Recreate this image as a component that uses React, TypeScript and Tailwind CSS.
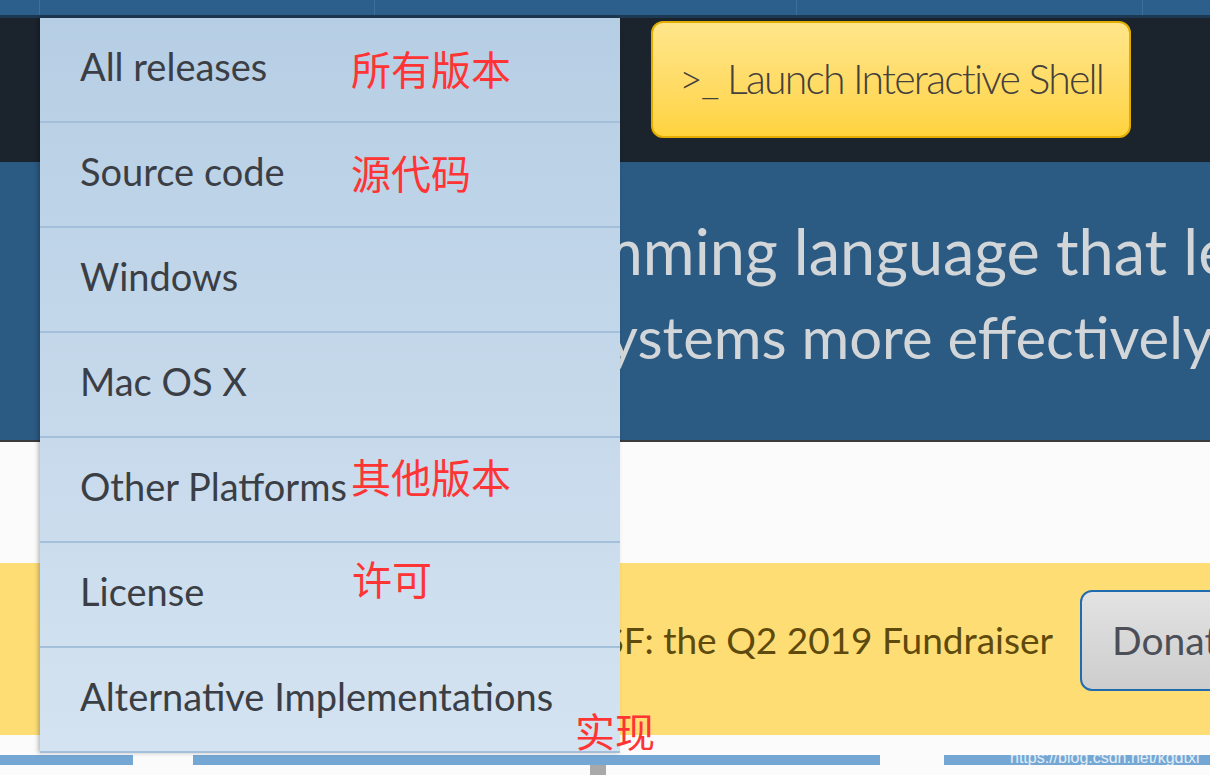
const menuItems = [
  "All releases",
  "Source code",
  "Windows",
  "Mac OS X",
  "Other Platforms",
  "License",
  "Alternative Implementations",
];

const notes = [
  { text: "所有版本", cls: "left-[351px] top-[46px]" },
  { text: "源代码", cls: "left-[351px] top-[150px]" },
  { text: "其他版本", cls: "left-[351px] top-[454px]" },
  { text: "许可", cls: "left-[352px] top-[556px]" },
  { text: "实现", cls: "left-[575px] top-[708px]" },
];

export default function App() {
  return (
    <div className="relative w-[1210px] h-[775px] overflow-hidden bg-[#fbfbfb] font-['Lato','Noto_Sans',sans-serif]">

      {/* TOP NAV STRIP */}

      <div className="flex h-[15px] bg-[#2c5f8b]">
        <div className="w-[40px] border-r border-[#3d6f9b]" />
        <div className="w-[335px] border-r border-[#3d6f9b]" />
        <div className="w-[422px] border-r border-[#3d6f9b]" />
        <div className="w-[346px] border-r border-[#3d6f9b]" />
        <div className="flex-1" />
      </div>
      <div className="h-[3px] bg-[#1d3852]" />

      {/* DARK HEADER */}

      <div className="flex h-[144px] bg-[#1b232d] pl-[651px] pt-[3px]">
        <button className="flex h-[117px] w-[480px] items-center justify-center whitespace-nowrap rounded-[12px] border-2 border-[#e2ad00] bg-gradient-to-b from-[#ffe68a] to-[#ffd33d] pb-[2px] text-[41px] font-light tracking-[-1.8px] text-[#45403c]">
          &gt;_ Launch Interactive Shell
        </button>
      </div>

      {/* HERO */}

      <div className="h-[280px] overflow-hidden border-b-2 border-[#3b3b3b] bg-[#2b5a83] pt-[47px] text-[#d3d6d9] whitespace-nowrap">
        <div className="flex text-[63px] leading-[84px]">
          <span className="w-[591px] shrink-0 text-right">
            Python is a progra
          </span>
          <span>mming language that lets you work quickly</span>
        </div>
        <div className="flex text-[58px] leading-[88px]">
          <span className="w-[608px] shrink-0 text-right">
            and integrate s
          </span>
          <span>ystems more effectively.</span>
        </div>
      </div>

      {/* WHITE GAP */}

      <div className="h-[121px] bg-[#fbfbfb]" />

      {/* FUNDRAISER BAND */}

      <div className="flex h-[172px] items-center justify-end gap-[27px] overflow-hidden bg-[#ffdd75] pb-[18px]">
        <span className="whitespace-nowrap text-[37px] text-[#5d4a0c]">
          Support the PSF: the Q2 2019 Fundraiser
        </span>
        <button className="mr-[-80px] flex h-[101px] w-[210px] shrink-0 items-center rounded-[12px] border-2 border-[#1f6db0] bg-gradient-to-b from-[#e3e3e3] to-[#cdcdcd] pl-[30px] text-[39px] text-[#4c4f58]">
          Donate
        </button>
      </div>

      {/* FOOTER STRIP */}

      <div className="relative h-[40px] bg-[#fbfbfb] pt-[20px]">
        <div className="flex h-[10px]">
          <div className="w-[133px] bg-[#74a7d3]" />
          <div className="w-[60px]" />
          <div className="w-[687px] bg-[#74a7d3]" />
          <div className="w-[64px]" />
          <div className="flex-1 bg-[#74a7d3]" />
        </div>
        <div className="ml-[590px] h-[10px] w-[16px] bg-[#a9a9a9]" />
        <span className="absolute left-[1010px] top-[11px] text-[16px] text-white/80 font-['Liberation_Sans',sans-serif]">
          https://blog.csdn.net/kgdtxl
        </span>
      </div>

      {/* DROPDOWN MENU */}

      <ul className="absolute left-[40px] top-[18px] w-[580px] bg-gradient-to-b from-[#b6cee4] to-[#d4e3f1] shadow-[-2px_0_4px_rgba(0,0,0,0.25)]">
        {menuItems.map((item) => (
          <li
            key={item}
            className="flex h-[105px] items-center border-b-2 border-[#a3bfda] pb-[6px] pl-[40px] text-[38px] text-[#3b3f45]"
          >
            {item}
          </li>
        ))}
      </ul>

      {/* RED NOTES */}

      {notes.map((note) => (
        <span
          key={note.text}
          className={`absolute ${note.cls} text-[40px] leading-[44px] text-[#ff3434] font-['Noto_Sans_CJK_SC',sans-serif]`}
        >
          {note.text}
        </span>
      ))}
    </div>
  );
}
